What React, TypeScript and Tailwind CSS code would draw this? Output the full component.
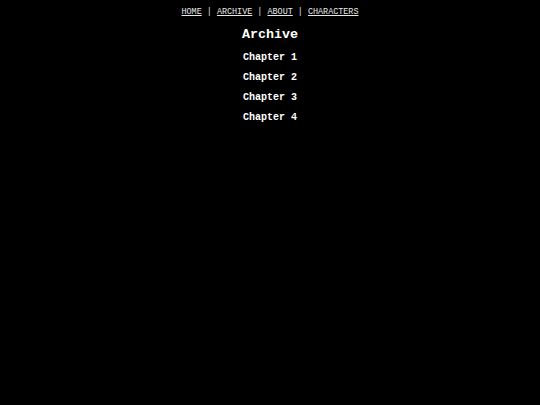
export default function App() {
  const mono = { fontFamily: '"Liberation Mono", "DejaVu Sans Mono", monospace' };
  return (
    <div className="min-h-[405px] w-full bg-black text-white" style={mono}>
      <div className="flex flex-col items-center pt-[7px]">
        <nav className="text-[8.43px] leading-[10px] text-[#e8e8e8] whitespace-pre">
          <a className="underline">HOME</a> | <a className="underline">ARCHIVE</a> | <a className="underline">ABOUT</a> | <a className="underline">CHARACTERS</a>
        </nav>
        <h1 className="mt-[10px] text-[13.33px] leading-[16px] font-bold">Archive</h1>
        <ul className="mt-[9px] flex flex-col items-center gap-[8px] text-[10px] leading-[12px] font-bold">
          <li>Chapter 1</li>
          <li>Chapter 2</li>
          <li>Chapter 3</li>
          <li>Chapter 4</li>
        </ul>
      </div>
    </div>
  );
}
